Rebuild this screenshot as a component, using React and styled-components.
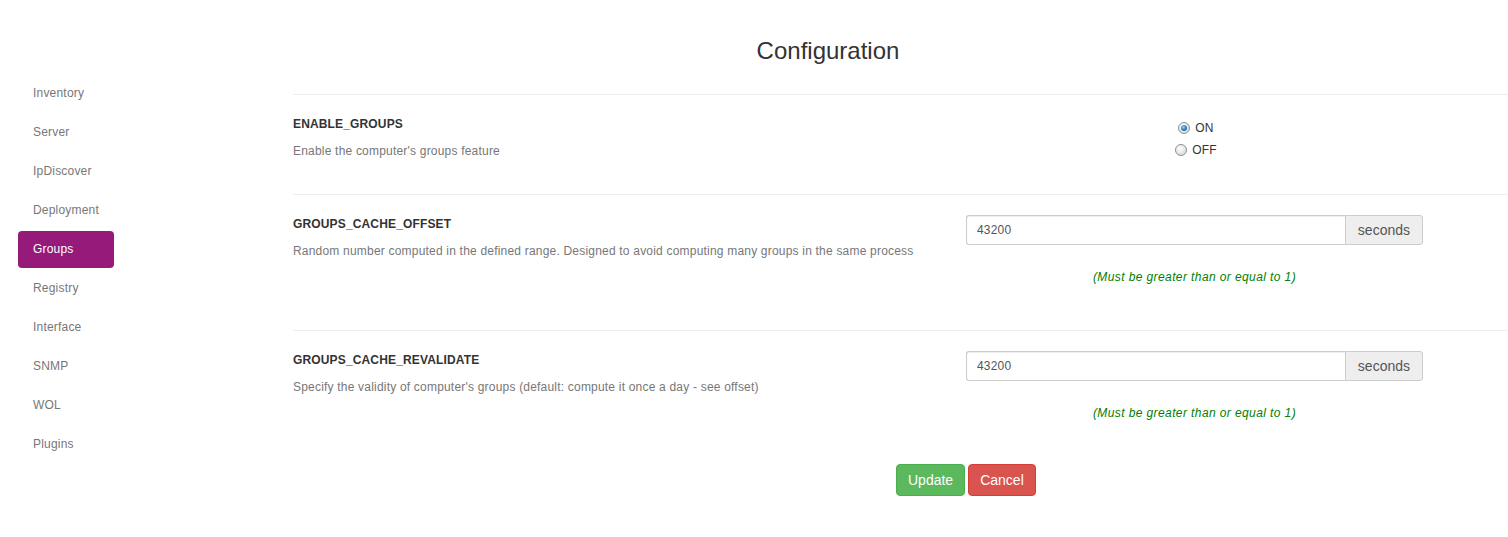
import React from 'react';
import styled, {createGlobalStyle} from "styled-components";

const GlobalStyle = createGlobalStyle`
  * {
    box-sizing: border-box;
  }

  body {
    margin: 0;
    background: #ffffff;
    font-family: "Liberation Sans", Arial, sans-serif;
    color: #333333;
    overflow: hidden;
  }
`

const Page = styled.div`
  display: flex;
  width: 1508px;
  min-height: 537px;
`

const Sidebar = styled.ul`
  list-style: none;
  margin: 0;
  padding: 75px 0 0 18px;
  width: 293px;
  flex-shrink: 0;
`

const NavItem = styled.li`
  width: 96px;
  height: 37px;
  margin-bottom: 2px;
  padding: 10px 15px;
  font-size: 12px;
  line-height: 17px;
  letter-spacing: 0.2px;
  border-radius: 4px;
  color: ${props => props.$active ? '#ffffff' : '#777777'};
  background: ${props => props.$active ? '#961a7a' : 'transparent'};
  cursor: pointer;
`

const Main = styled.div`
  flex: 1;
  display: flex;
  flex-direction: column;
`

const Title = styled.h1`
  width: 1070px;
  margin: 38px 0 30px;
  font-size: 24px;
  font-weight: normal;
  line-height: 26px;
  text-align: center;
  color: #333333;
`

const Row = styled.div`
  display: flex;
  gap: 30px;
  height: ${props => props.$height}px;
  padding-top: 20px;
  border-top: 1px solid #eeeeee;
`

const Info = styled.div`
  width: 643px;
  flex-shrink: 0;
  padding-top: 1px;
`

const Label = styled.div`
  font-size: 12px;
  font-weight: bold;
  line-height: 17px;
  letter-spacing: 0.15px;
  color: #333333;
  margin-bottom: 10px;
`

const Description = styled.div`
  font-size: 12px;
  line-height: 17px;
  letter-spacing: 0.2px;
  color: #777777;
`

const Control = styled.div`
  width: 457px;
  display: flex;
  flex-direction: column;
  align-items: center;
`

const RadioGroup = styled.div`
  display: flex;
  flex-direction: column;
  align-items: center;
  gap: 2px;
  margin-top: 3px;
  padding-left: 3px;
`

const RadioLine = styled.label`
  display: flex;
  align-items: center;
  gap: 5px;
  height: 20px;
  font-size: 12px;
  letter-spacing: 0.2px;
  color: #333333;
`

const RadioDot = styled.span`
  width: 12px;
  height: 12px;
  border-radius: 50%;
  border: 1px solid #8f8f8f;
  background: radial-gradient(circle at 40% 35%, #ffffff 0%, #e6e6e6 55%, #cfcfcf 100%);
  display: flex;
  align-items: center;
  justify-content: center;

  &::after {
    content: '';
    display: ${props => props.$checked ? 'block' : 'none'};
    width: 6px;
    height: 6px;
    border-radius: 50%;
    background: radial-gradient(circle at 40% 35%, #8fd3ff 0%, #2a86c8 50%, #0b4f86 100%);
  }
`

const InputGroup = styled.div`
  display: flex;
  width: 100%;
  height: 30px;
`

const TextInput = styled.input`
  flex: 1;
  min-width: 0;
  height: 30px;
  padding: 5px 10px;
  font-family: "Liberation Sans", Arial, sans-serif;
  font-size: 12px;
  letter-spacing: 0.2px;
  color: #555555;
  border: 1px solid #cccccc;
  border-right: none;
  border-radius: 3px 0 0 3px;
  box-shadow: inset 0 1px 1px rgba(0, 0, 0, 0.075);
  outline: none;
`

const Addon = styled.span`
  display: flex;
  align-items: center;
  padding: 0 12px;
  font-size: 14px;
  color: #555555;
  background: #eeeeee;
  border: 1px solid #cccccc;
  border-radius: 0 3px 3px 0;
`

const Help = styled.div`
  margin-top: 24px;
  font-size: 12px;
  line-height: 17px;
  letter-spacing: 0.4px;
  font-style: italic;
  color: #008000;
`

const ButtonBar = styled.div`
  display: flex;
  gap: 3px;
  padding-left: 603px;
`

const Button = styled.button`
  height: 32px;
  padding: 5px 11px;
  font-family: "Liberation Sans", Arial, sans-serif;
  font-size: 14px;
  color: #ffffff;
  background: ${props => props.$color};
  border: 1px solid ${props => props.$border};
  border-radius: 4px;
  cursor: pointer;
`

const menu = ['Inventory', 'Server', 'IpDiscover', 'Deployment', 'Groups', 'Registry', 'Interface', 'SNMP', 'WOL', 'Plugins'];

const numberSettings = [
    {
        name: 'GROUPS_CACHE_OFFSET',
        text: 'Random number computed in the defined range. Designed to avoid computing many groups in the same process',
        value: '43200',
        height: 136,
    },
    {
        name: 'GROUPS_CACHE_REVALIDATE',
        text: "Specify the validity of computer's groups (default: compute it once a day - see offset)",
        value: '43200',
        height: 134,
    },
];

const App = () => {
    return (
        <Page>
            <GlobalStyle />
            <Sidebar>
                {menu.map(item => (
                    <NavItem key={item} $active={item === 'Groups'}>{item}</NavItem>
                ))}
            </Sidebar>
            <Main>
                <Title>Configuration</Title>
                <Row $height={100}>
                    <Info>
                        <Label>ENABLE_GROUPS</Label>
                        <Description>Enable the computer's groups feature</Description>
                    </Info>
                    <Control>
                        <RadioGroup>
                            <RadioLine><RadioDot $checked />ON</RadioLine>
                            <RadioLine><RadioDot />OFF</RadioLine>
                        </RadioGroup>
                    </Control>
                </Row>
                {numberSettings.map(setting => (
                    <Row key={setting.name} $height={setting.height}>
                        <Info>
                            <Label>{setting.name}</Label>
                            <Description>{setting.text}</Description>
                        </Info>
                        <Control>
                            <InputGroup>
                                <TextInput defaultValue={setting.value} />
                                <Addon>seconds</Addon>
                            </InputGroup>
                            <Help>(Must be greater than or equal to 1)</Help>
                        </Control>
                    </Row>
                ))}
                <ButtonBar>
                    <Button $color="#5cb85c" $border="#4cae4c">Update</Button>
                    <Button $color="#d9534f" $border="#d43f3a">Cancel</Button>
                </ButtonBar>
            </Main>
        </Page>
    );
};

export default App;
